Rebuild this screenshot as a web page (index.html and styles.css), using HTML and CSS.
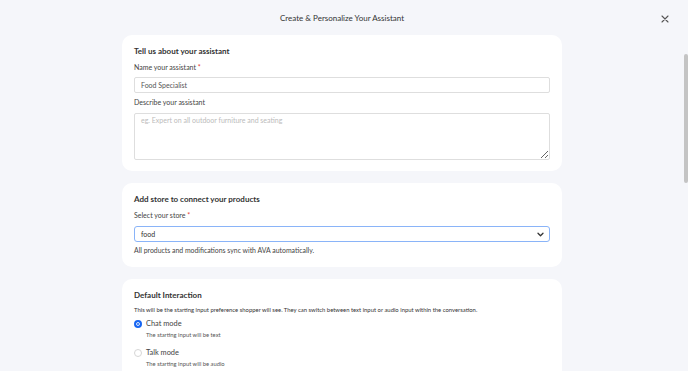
FILE: index.html
```html
<!DOCTYPE html>
<html lang="en">
<head>
    <meta charset="UTF-8">
    <meta name="viewport" content="width=device-width, initial-scale=1.0">
    <title>Create & Personalize Your Assistant</title>
    <link rel="stylesheet" href="styles.css">
</head>
<body>

    <div class="page">
        <header class="modal-head">
            <span></span>
            <h1>Create &amp; Personalize Your Assistant</h1>
            <button class="close" aria-label="Close">
                <svg width="8" height="8" viewBox="0 0 8 8"><path d="M1 1L7 7M7 1L1 7" stroke="#555" stroke-width="1.1" stroke-linecap="round"/></svg>
            </button>
        </header>

        <main class="cards">
            <section class="card">
                <h2>Tell us about your assistant</h2>
                <label class="field-label">Name your assistant <span class="req">*</span></label>
                <input type="text" class="text-input" value="Food Specialist">
                <label class="field-label gap-top">Describe your assistant</label>
                <textarea class="text-area" placeholder="eg. Expert on all outdoor furniture and seating"></textarea>
            </section>

            <section class="card">
                <h2>Add store to connect your products</h2>
                <label class="field-label">Select your store <span class="req">*</span></label>
                <div class="select">
                    <span>food</span>
                    <svg width="7" height="5" viewBox="0 0 7 5"><path d="M1 1.2L3.5 3.7L6 1.2" fill="none" stroke="#333" stroke-width="1.3" stroke-linecap="round" stroke-linejoin="round"/></svg>
                </div>
                <p class="helper">All products and modifications sync with AVA automatically.</p>
            </section>

            <section class="card">
                <h2>Default Interaction</h2>
                <p class="desc">This will be the starting input preference shopper will see. They can switch between text input or audio input within the conversation.</p>
                <div class="option">
                    <span class="radio checked"></span>
                    <div>
                        <div class="option-title">Chat mode</div>
                        <div class="option-sub">The starting input will be text</div>
                    </div>
                </div>
                <div class="option">
                    <span class="radio"></span>
                    <div>
                        <div class="option-title">Talk mode</div>
                        <div class="option-sub">The starting input will be audio</div>
                    </div>
                </div>
            </section>
        </main>
    </div>

    <div class="scroll-thumb"></div>

</body>
</html>
```

FILE: styles.css
```css
body {
    font-family: 'Lato', 'Open Sans', sans-serif;
    background-color: #f5f6fa;
    margin: 0;
    padding: 0;
    height: 371px;
    overflow: hidden;
    color: #333;
}
.page {
    padding-right: 4px;
}
.modal-head {
    display: grid;
    grid-template-columns: 1fr auto 1fr;
    align-items: center;
    height: 35px;
}
.modal-head h1 {
    margin: 0;
    font-size: 8px;
    font-weight: 400;
    color: #333;
    line-height: 12px;
}
.close {
    justify-self: end;
    margin-right: 14px;
    margin-top: 2px;
    width: 10px;
    height: 10px;
    padding: 0;
    border: none;
    background: none;
    display: flex;
    align-items: center;
    justify-content: center;
}
.cards {
    width: 440px;
    margin: 0 auto;
    display: flex;
    flex-direction: column;
    gap: 12px;
}
.card {
    background-color: #fff;
    border-radius: 10px;
    padding: 10px 12px 11px;
    display: flex;
    flex-direction: column;
}
.card h2 {
    margin: 0 0 5px;
    font-size: 8px;
    font-weight: 700;
    line-height: 12px;
    color: #333;
}
.field-label {
    font-size: 7px;
    line-height: 10px;
    color: #444;
    margin-bottom: 5px;
}
.field-label.gap-top {
    margin-top: 4px;
    margin-bottom: 6px;
}
.req {
    color: #e53935;
}
.text-input {
    box-sizing: border-box;
    height: 16px;
    width: 100%;
    margin: 0;
    padding: 0 6px;
    border: 1px solid #dedede;
    border-radius: 2px;
    font-family: inherit;
    font-size: 7px;
    color: #555;
}
.text-area {
    box-sizing: border-box;
    height: 47px;
    width: 100%;
    margin: 0;
    padding: 2px 6px;
    border: 1px solid #dedede;
    border-radius: 2px;
    font-family: inherit;
    font-size: 7px;
    resize: vertical;
}
.text-area::placeholder {
    color: #bbb;
}
.select {
    box-sizing: border-box;
    height: 16px;
    margin-top: 1px;
    padding: 0 5px 0 6px;
    border: 1px solid #8ab4f8;
    border-radius: 3px;
    display: flex;
    align-items: center;
    justify-content: space-between;
    font-size: 7px;
    color: #333;
}
.helper {
    margin: 3px 0 1px;
    font-size: 6.9px;
    line-height: 10px;
    color: #444;
}
.desc {
    margin: -1px 0 4px;
    font-size: 5.9px;
    line-height: 10px;
    color: #333;
}
.option {
    display: flex;
    gap: 4px;
    margin-bottom: 7px;
}
.radio {
    box-sizing: border-box;
    width: 8px;
    height: 8px;
    margin-top: 1px;
    border-radius: 50%;
    border: 1px solid #d6d6d6;
    background: #fff;
}
.radio.checked {
    border: 2px solid #1766f2;
    box-shadow: inset 0 0 0 1px #fff;
    background: #1766f2;
}
.option-title {
    font-size: 7.4px;
    line-height: 10px;
    color: #444;
}
.option-sub {
    font-size: 5.8px;
    line-height: 12px;
    color: #555;
}
.scroll-thumb {
    position: absolute;
    right: 0;
    top: 54px;
    width: 4px;
    height: 129px;
    border-radius: 2px;
    background-color: #c4c4c4;
}
```
